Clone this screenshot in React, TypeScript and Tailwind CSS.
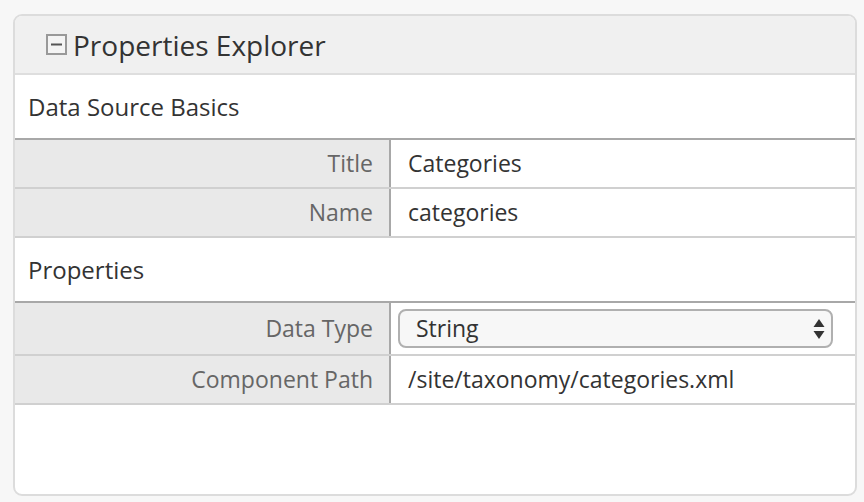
import React from "react";

type Row = { label: string; value: React.ReactNode };

function Section({ title, rows }: { title: string; rows: Row[] }) {
  return (
    <div>
      <div className="h-[63px] flex items-center pl-[13px] text-[24px] text-[#333]">{title}</div>
      <div className="border-t-2 border-[#a8a8a8]">
        {rows.map((r, i) => (
          <div key={i} className="flex border-b-2 border-[#d0d0d0]">
            <div className="w-[376px] shrink-0 bg-[#e9e9e9] border-r-2 border-[#a8a8a8] text-right pr-[16px] text-[#666] text-[23px] flex items-center justify-end">
              {r.label}
            </div>
            <div className="flex-1 flex items-center pl-[17px] pr-[23px] text-[23px] text-[#333]">{r.value}</div>
          </div>
        ))}
      </div>
    </div>
  );
}

function SelectBox() {
  return (
    <div className="w-[435px] h-[39px] my-[6px] -ml-[10px] rounded-[8px] border-2 border-[#b0b0b0] bg-[#f7f7f7] flex items-center justify-between pl-[16px] pr-[6px]">
      <span>String</span>
      <svg width="12" height="24" viewBox="0 0 12 24">
        <path d="M6 2 L11.5 10 L0.5 10 Z" fill="#333" />
        <path d="M6 22 L11.5 14 L0.5 14 Z" fill="#333" />
      </svg>
    </div>
  );
}

export default function App() {
  return (
    <div className="w-[864px] h-[502px] bg-[#f7f7f7] pt-[14px] pl-[13px] pr-[7px] pb-[6px]" style={{ fontFamily: '"Open Sans", sans-serif' }}>
      <div className="h-[482px] border-2 border-[#dcdcdc] rounded-[9px] bg-white overflow-hidden">
        <div className="h-[59px] bg-[#f0f0f0] border-b-2 border-[#dedede] flex items-center pl-[31px] gap-[6px]">
          <svg width="21" height="21" viewBox="0 0 21 21">
            <rect x="1" y="1" width="19" height="19" fill="#f4f4f4" stroke="#999" strokeWidth="2" />
            <rect x="5" y="9.5" width="11" height="2" fill="#555" />
          </svg>
          <span className="text-[28px] text-[#333]">Properties Explorer</span>
        </div>
        <Section
          title="Data Source Basics"
          rows={[
            { label: "Title", value: <div className="h-[47px] flex items-center">Categories</div> },
            { label: "Name", value: <div className="h-[47px] flex items-center">categories</div> },
          ]}
        />
        <Section
          title="Properties"
          rows={[
            { label: "Data Type", value: <SelectBox /> },
            { label: "Component Path", value: <div className="h-[47px] flex items-center">/site/taxonomy/categories.xml</div> },
          ]}
        />
      </div>
    </div>
  );
}
